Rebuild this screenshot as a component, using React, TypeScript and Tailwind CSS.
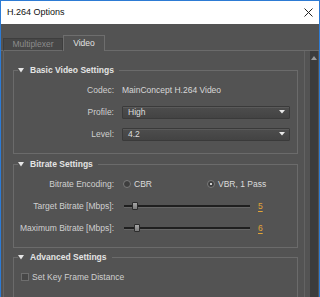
import React from 'react';

const LINE = 'border-[#6b6b6b]';

function Caret() {
  return (
    <svg width="6" height="5" viewBox="0 0 6 5" className="shrink-0">
      <polygon points="0,0 6,0 3,4.5" fill="#e6e6e6" />
    </svg>
  );
}

function Section({ title, className = '', children }: { title: string; className?: string; children: React.ReactNode }) {
  return (
    <fieldset className={`border ${LINE} w-[285px] ml-[9px] px-[4px] pt-[3px] ${className}`}>
      <legend className="pr-[5px]">
        <span className="flex items-center gap-[6px] h-[12px] leading-[12px] text-[8.5px] font-bold text-[#e4e4e4]">
          <Caret />
          {title}
        </span>
      </legend>
      {children}
    </fieldset>
  );
}

function Row({ label, children }: { label: string; children: React.ReactNode }) {
  return (
    <div className="flex items-center h-[22px]">
      <span className="w-[96px] text-right text-[#d0d0d0] shrink-0">{label}</span>
      <div className="ml-[8px] flex items-center">{children}</div>
    </div>
  );
}

function Select({ value }: { value: string }) {
  return (
    <div className="w-[168px] h-[13px] flex items-center justify-between pl-[5px] pr-[4px] rounded-[1px] border border-[#3a3a3a] bg-gradient-to-b from-[#4d4d4d] to-[#434343] shadow-[inset_0_1px_0_#5a5a5a] text-[#dedede]">
      <span>{value}</span>
      <svg width="6" height="4" viewBox="0 0 6 4">
        <polygon points="0,0 6,0 3,3.5" fill="#e8e8e8" />
      </svg>
    </div>
  );
}

function Radio({ checked, label, className = '' }: { checked?: boolean; label: string; className?: string }) {
  return (
    <div className={`flex items-center gap-[3px] ${className}`}>
      <span className="w-[8px] h-[8px] rounded-full border border-[#7a7a7a] bg-[#3e3e3e] flex items-center justify-center">
        {checked && <span className="w-[2px] h-[2px] rounded-full bg-white" />}
      </span>
      <span className="text-[#dcdcdc]">{label}</span>
    </div>
  );
}

function Slider({ pos, value }: { pos: number; value: string }) {
  return (
    <div className="flex items-center">
      <div className="relative w-[126px] h-[10px] ml-[2px] flex items-center">
        <div className="w-full h-[2px] bg-[#1f1f1f] shadow-[0_1px_0_#666]" />
        <div
          className="absolute top-[1px] w-[6px] h-[8px] rounded-[1px] border border-[#2c2c2c] bg-gradient-to-b from-[#a8a8a8] to-[#7a7a7a]"
          style={{ left: pos }}
        />
      </div>
      <span className="ml-[8px] text-[#e2a437] underline underline-offset-[2px]">{value}</span>
    </div>
  );
}

export default function App() {
  return (
    <div className="w-[320px] h-[297px] overflow-hidden flex flex-col bg-[#535353] border-t border-x border-[#2d7bd4] font-['Liberation_Sans',Arial,sans-serif] text-[8.5px]">
      <div className="h-[23px] bg-white flex items-center justify-between pl-[6px] pr-[6px] shrink-0">
        <span className="text-[9px] text-[#111]">H.264 Options</span>
        <svg width="9" height="9" viewBox="0 0 9 9">
          <path d="M0.5 0.5 L8.5 8.5 M8.5 0.5 L0.5 8.5" stroke="#222" strokeWidth="1" />
        </svg>
      </div>

      <div className="h-[27px] flex items-end shrink-0">
        <div className="w-[2px] h-px bg-[#6b6b6b]" />
        <div className="w-[60px] h-[13px] flex items-center justify-center bg-[#474747] border-t border-x border-[#3e3e3e] border-b-[#6b6b6b] border-b text-[#8c8c8c]">
          Multiplexer
        </div>
        <div className="w-[42px] h-[16px] flex items-center justify-center bg-[#535353] border-t border-x border-[#6e6e6e] text-[#e2e2e2] pb-[1px]">
          Video
        </div>
        <div className="flex-1 h-px bg-[#6b6b6b]" />
      </div>

      <div className="flex flex-1 min-h-0">
        <div className="ml-[2px] w-[302px] border-x border-[#636363] flex flex-col">
          <Section title="Basic Video Settings" className="mt-[13px] pb-[8px]">
            <Row label="Codec:">
              <span className="text-[#d8d8d8]">MainConcept H.264 Video</span>
            </Row>
            <Row label="Profile:">
              <Select value="High" />
            </Row>
            <Row label="Level:">
              <Select value="4.2" />
            </Row>
          </Section>

          <Section title="Bitrate Settings" className="mt-[4px] pb-[8px]">
            <Row label="Bitrate Encoding:">
              <Radio label="CBR" className="ml-[1px] w-[84px]" />
              <Radio checked label="VBR, 1 Pass" />
            </Row>
            <Row label="Target Bitrate [Mbps]:">
              <Slider pos={8} value="5" />
            </Row>
            <Row label="Maximum Bitrate [Mbps]:">
              <Slider pos={10} value="6" />
            </Row>
          </Section>

          <Section title="Advanced Settings" className="mt-[3px] pb-[20px]">
            <div className="flex items-center h-[22px] pl-[3px] gap-[3px]">
              <span className="w-[8px] h-[8px] border border-[#6e6e6e] bg-[#474747]" />
              <span className="text-[#d0d0d0]">Set Key Frame Distance</span>
            </div>
          </Section>
        </div>

        <div className="ml-[5px] w-[8px] bg-[#3c3c3c] flex justify-center pt-[5px]">
          <svg width="6" height="4" viewBox="0 0 6 4">
            <polygon points="3,0 6,4 0,4" fill="#9a9a9a" />
          </svg>
        </div>
      </div>
    </div>
  );
}
